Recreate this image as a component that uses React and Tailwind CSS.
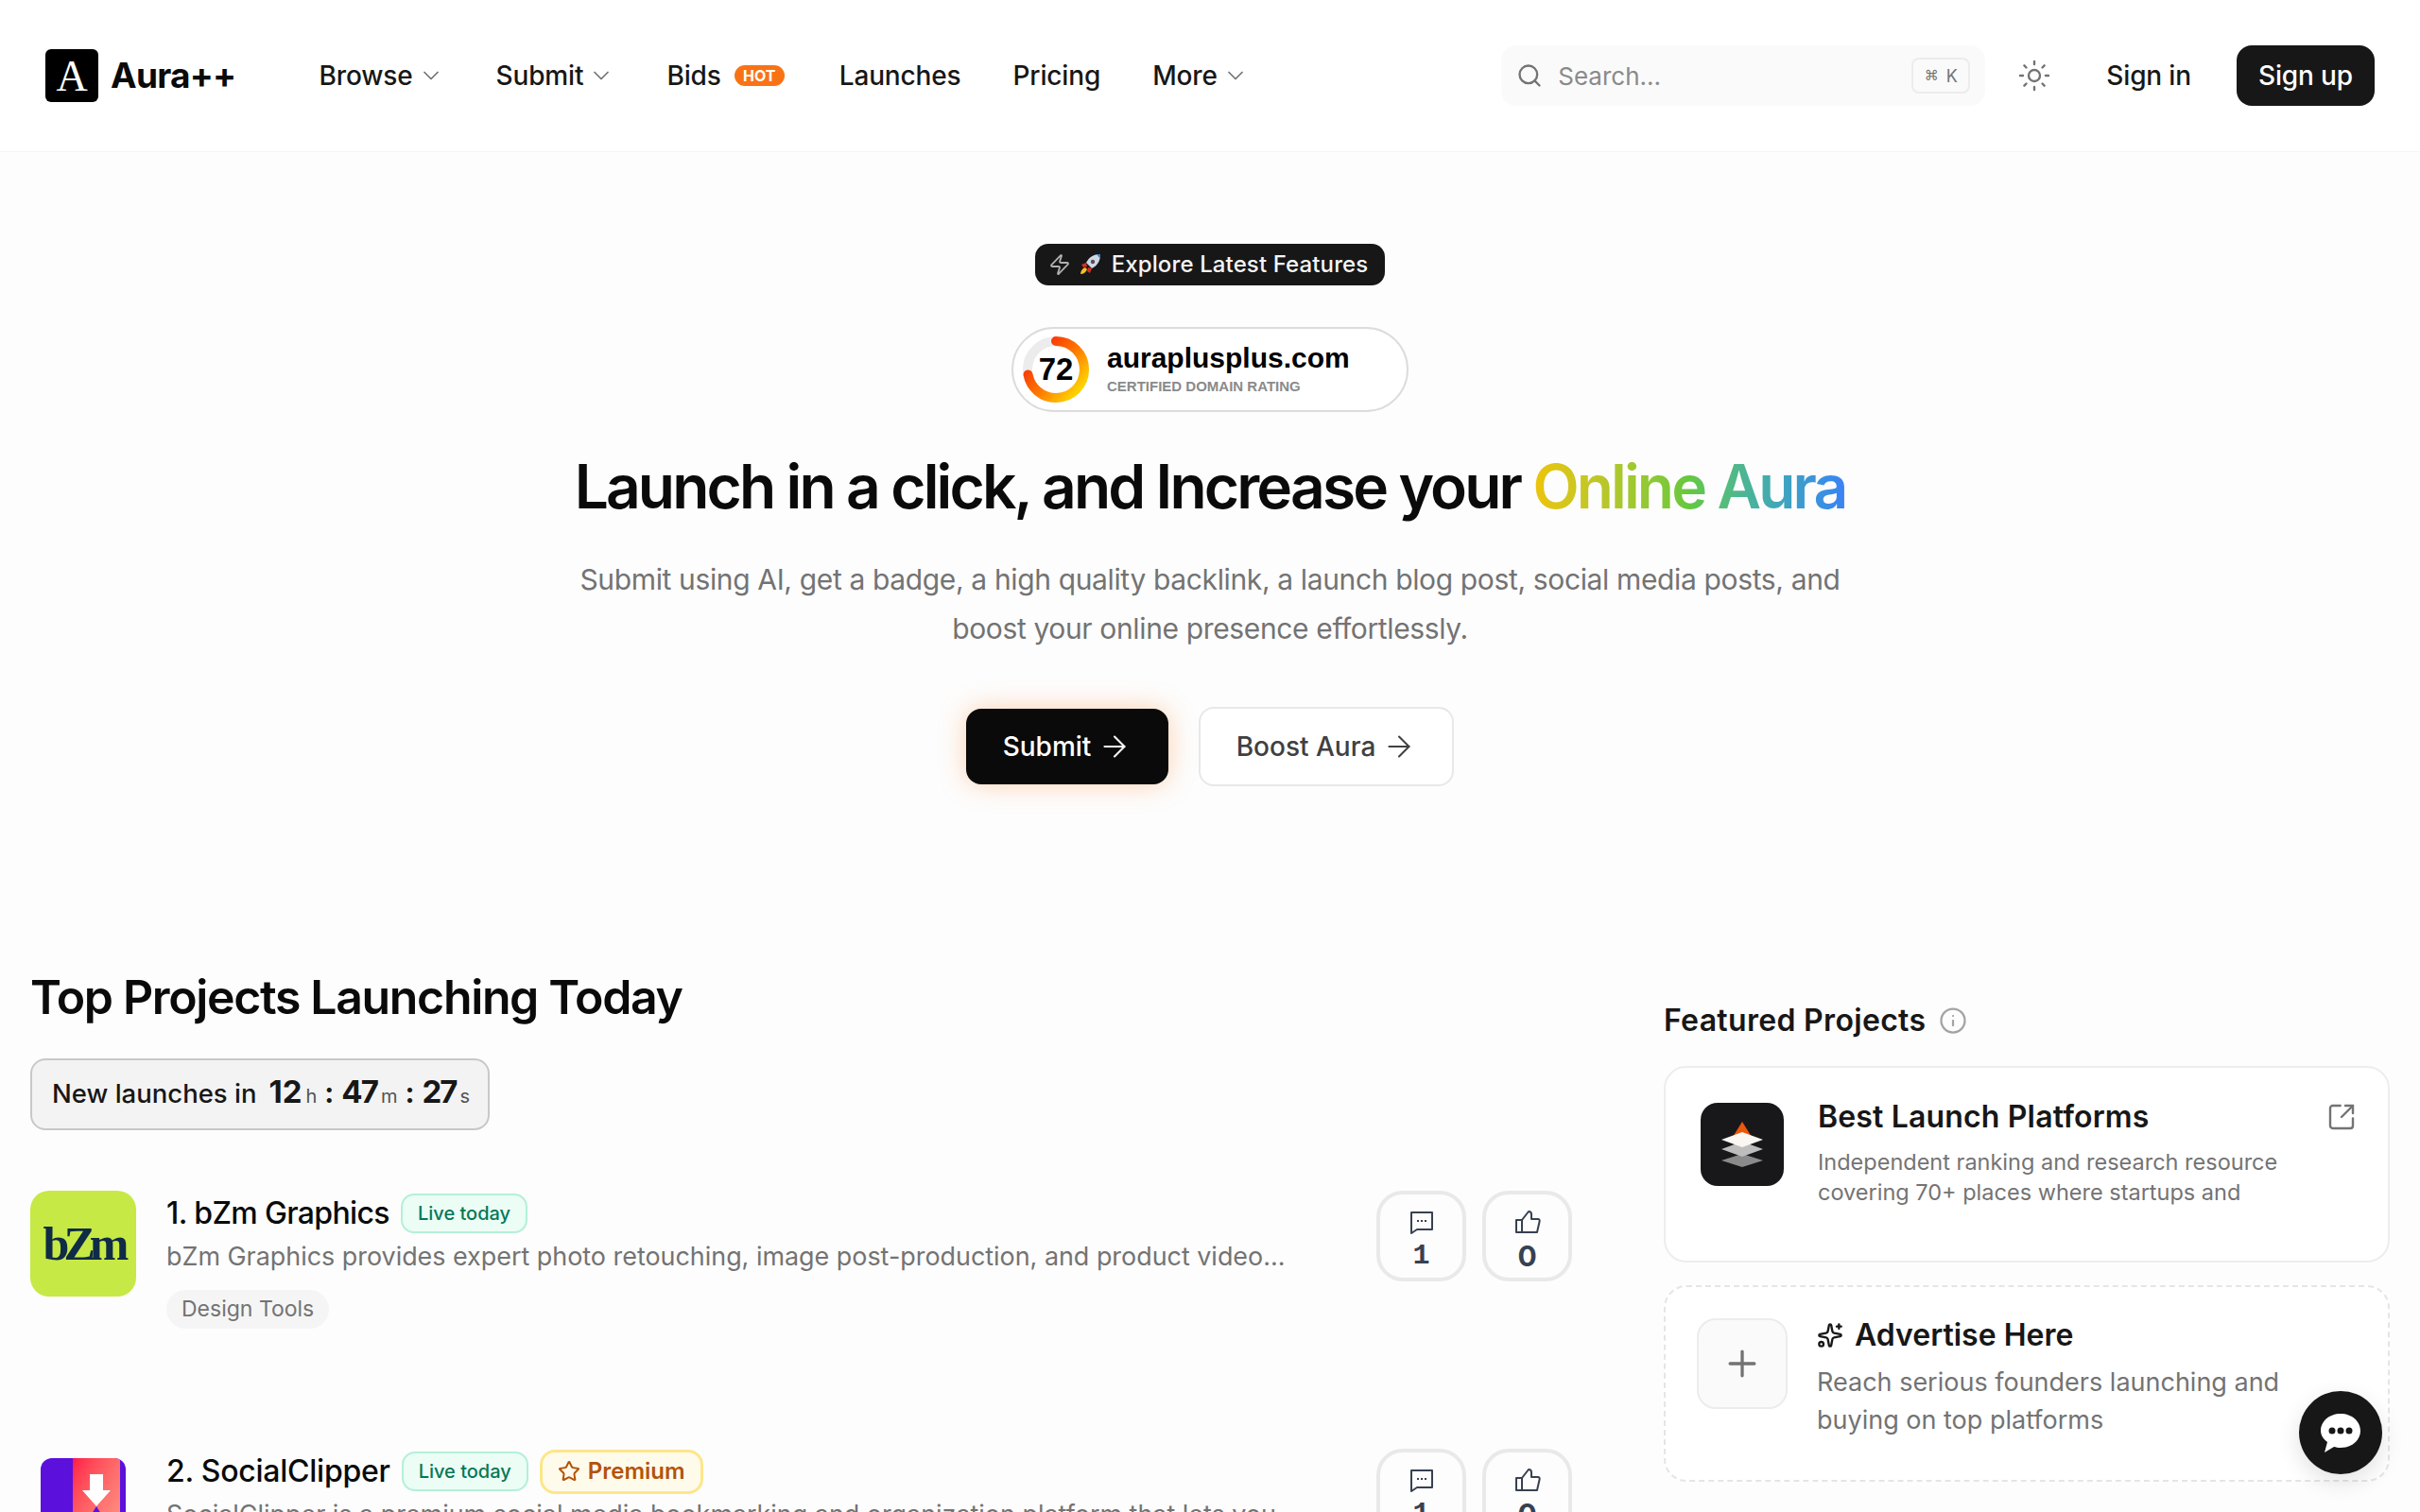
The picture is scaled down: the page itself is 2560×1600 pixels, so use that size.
import React from 'react'
import { ChevronDown, Search, Sun, Zap, ArrowRight, Info, SquareArrowOutUpRight, Plus, Sparkles, Star } from 'lucide-react'

const CommentIcon = () => (
  <svg width="26" height="26" viewBox="0 0 26 26" fill="none" stroke="#374151" strokeWidth="2">
    <path d="M2 3h22v18H8l-6 4z" strokeLinejoin="round" />
    <path d="M8 12h2M12 12h2M16 12h2" />
  </svg>
)

const ThumbIcon = () => (
  <svg width="28" height="26" viewBox="0 0 28 26" fill="none" stroke="#374151" strokeWidth="2" strokeLinejoin="round">
    <path d="M2 11h6v13H2z" />
    <path d="M8 11l7-9c2 0 3 1 3 3v5h7c1 0 2 1 1.600 2.500L24 24H8" />
  </svg>
)

const Rocket = () => (
  <svg width="24" height="24" viewBox="0 0 24 24">
    <path d="M8 10C11 4 16 1 23 1c0 7-3 12-9 15z" fill="#cfd8e3" />
    <path d="M19 1h4c0 2 0 3-.5 4.500z" fill="#3b82c4" />
    <circle cx="15" cy="9" r="2.200" fill="#5b4a5f" />
    <path d="M8 10l-5 2 2 3 4-1zM14 16l-2 5-3-2 1-4z" fill="#d92d20" />
    <path d="M7 15c-3 1-5 4-5 7 3 0 6-2 7-5z" fill="#fbbf24" />
  </svg>
)

const ScoreRing = () => (
  <svg width="72" height="72" viewBox="0 0 72 72">
    <defs>
      <linearGradient id="ring" x1="0.85" y1="0.1" x2="0.15" y2="0.9">
        <stop offset="0" stopColor="#f52a0a" />
        <stop offset="0.55" stopColor="#ff7a00" />
        <stop offset="1" stopColor="#fdd000" />
      </linearGradient>
    </defs>
    <circle cx="36" cy="36" r="30" fill="none" stroke="#ececec" strokeWidth="10" />
    <circle
      cx="36"
      cy="36"
      r="30"
      fill="none"
      stroke="url(#ring)"
      strokeWidth="10"
      strokeLinecap="round"
      strokeDasharray="135.700 188.500"
      transform="rotate(-90 36 36)"
    />
  </svg>
)

const LayersLogo = () => (
  <svg width="44" height="48" viewBox="0 0 44 48">
    <path d="M22 0l10 16H12z" fill="#ea580c" />
    <path d="M22 34l22 7-22 7L0 41z" fill="#8a8a8a" />
    <path d="M22 21l22 8-22 8L0 29z" fill="#bdbdbd" />
    <path d="M22 11l22 8-22 8L0 19z" fill="#faf7f2" />
  </svg>
)

const SocialClipperLogo = () => (
  <div className="relative w-[90px] h-[90px] mt-[10px] ml-[11px] rounded-[12px] overflow-hidden bg-[#5b10dc]">
    <div className="absolute left-[34px] top-0 w-[50px] h-full bg-gradient-to-br from-[#ff1248] to-[#ff9c8c]" />
    <svg className="absolute left-[44px] top-[17px]" width="30" height="50" viewBox="0 0 30 50">
      <path d="M8 0h14v17h8L15 34 0 17h8z" fill="#fff" />
      <path d="M15 34l10 16H5z" fill="#5b10dc" />
    </svg>
  </div>
)

const NavItem = ({ label, chevron }) => (
  <a className="flex items-center gap-[5px] text-[28px] font-medium tracking-[-0.005em] text-[#171717] leading-[40px]">
    {label}
    {chevron && <ChevronDown className="w-[28px] h-[28px] text-[#737373]" strokeWidth={1.5} />}
  </a>
)

const LiveBadge = () => (
  <span className="flex items-center h-[42px] px-[16px] rounded-[14px] border-2 border-[#b3f0d8] bg-[#ecfdf5] text-[#047857] text-[20px] font-medium">
    Live today
  </span>
)

const VoteBox = ({ icon, count, numClass }) => (
  <div className="flex flex-col items-center w-[95px] h-[96px] pt-[16px] rounded-[28px] border-4 border-[#e9e9e9] bg-[#fdfdfd]">
    {icon}
    <span className={`mt-[5px] text-[30px] leading-[36px] font-bold text-[#374151] ${numClass}`}>{count}</span>
  </div>
)

const ProjectRow = ({ logo, title, titleClass, desc, badges, tags }) => (
  <div className="flex items-start h-[273px]">
    <div className="w-[112px] h-[112px] shrink-0">{logo}</div>
    <div className="ml-[32px] w-[1240px]">
      <div className="flex items-center gap-[12px] h-[44px] mt-[2px]">
        <h3 className={`text-[32px] font-medium text-[#0a0a0a] ${titleClass}`}>{title}</h3>
        {badges}
      </div>
      <p className="mt-[3px] text-[26.900px] leading-[40px] text-[#737373] whitespace-nowrap">{desc}</p>
      {tags && (
        <span className="inline-block mt-[16px] h-[41px] px-[16px] rounded-full bg-[#f5f5f5] text-[23px] leading-[41px] text-[#737373]">
          {tags}
        </span>
      )}
    </div>
    <div className="ml-auto flex gap-[17px]">
      <VoteBox icon={<CommentIcon />} count="1" numClass="font-['Liberation_Mono',monospace]" />
      <VoteBox icon={<ThumbIcon />} count="0" numClass="font-['Inter',sans-serif]" />
    </div>
  </div>
)

export default function App() {
  return (
    <div className="relative h-[1600px] overflow-hidden bg-[#fdfdfd] font-['Inter',sans-serif] text-[#0a0a0a]">
      {/* Header */}
      <header className="flex items-center h-[161px] px-[48px] bg-white border-b border-[#f5f5f5]">
        <div className="flex items-center gap-[13px]">
          <div className="flex items-center justify-center w-[56px] h-[56px] rounded-[6px] bg-black text-white text-[46px] font-['Liberation_Serif',serif]">
            A
          </div>
          <span className="text-[37px] font-bold tracking-[-0.02em] text-[#0a0a0a]">Aura++</span>
        </div>
        <nav className="flex items-center gap-[55px] ml-[88px]">
          <NavItem label="Browse" chevron />
          <NavItem label="Submit" chevron />
          <div className="flex items-center gap-[14px] mr-[3px]">
            <NavItem label="Bids" />
            <span className="flex items-center justify-center w-[53px] h-[22px] rounded-full bg-[#f97316] text-white text-[16px] font-bold">
              HOT
            </span>
          </div>
          <NavItem label="Launches" />
          <NavItem label="Pricing" />
          <NavItem label="More" chevron />
        </nav>
        <div className="flex items-center ml-auto">
          <div className="flex items-center w-[512px] h-[64px] pl-[16px] pr-[16px] rounded-[16px] bg-[#fafafa]">
            <Search className="w-[28px] h-[28px] text-[#737373]" strokeWidth={2} />
            <span className="ml-[16px] text-[26px] text-[#8a8a8a]">Search...</span>
            <span className="ml-auto flex items-center justify-center gap-[8px] w-[62px] h-[38px] rounded-[8px] border-2 border-[#ececec] text-[18px] text-[#737373]">
              <span className="text-[15px] font-['DejaVu_Sans',sans-serif]">⌘</span>K
            </span>
          </div>
          <Sun className="ml-[34px] w-[36px] h-[36px] text-[#737373]" strokeWidth={1.6} />
          <span className="ml-[58px] text-[28px] font-medium tracking-[-0.005em] text-[#171717]">Sign in</span>
          <button className="ml-[48px] w-[146px] h-[64px] rounded-[16px] bg-[#171717] text-white text-[28px] font-medium tracking-[-0.005em]">
            Sign up
          </button>
        </div>
      </header>

      {/* Hero */}
      <section className="flex flex-col items-center pt-[97px]">
        <div className="flex items-center h-[44px] pl-[14px] pr-[18px] rounded-[14px] bg-[#171717] text-white text-[24px] font-medium">
          <Zap className="w-[24px] h-[24px] text-[#b0b0b0]" strokeWidth={1.8} />
          <span className="ml-[8px]"><Rocket /></span>
          <span className="ml-[11px] tracking-[0.005em] text-[#f5f5f5]">Explore Latest Features</span>
        </div>
        <div className="flex items-center w-[420px] h-[90px] mt-[44px] pl-[9px] rounded-full border-2 border-[#dcdcdc] bg-white font-['Liberation_Sans',sans-serif]">
          <div className="relative w-[72px] h-[72px]">
            <ScoreRing />
            <span className="absolute inset-0 flex items-center justify-center text-[33px] font-bold text-black">72</span>
          </div>
          <div className="ml-[18px]">
            <div className="text-[30px] leading-[34px] font-bold text-black mt-[-2px]">auraplusplus.com</div>
            <div className="mt-[4px] text-[15px] leading-[18px] font-bold text-[#8a8a8a]">CERTIFIED DOMAIN RATING</div>
          </div>
        </div>
        <h1 className="mt-[43px] text-[64px] leading-[72px] font-semibold tracking-[-0.0445em] text-[#0a0a0a]">
          Launch in a click, and Increase your{' '}
          <span className="bg-gradient-to-r from-[#eec404] via-[#65c83c] to-[#3b82f6] bg-clip-text text-transparent">Online Aura</span>
        </h1>
        <p className="mt-[36px] text-center text-[30px] leading-[52px] text-[#737373] tracking-[-0.012em] whitespace-nowrap">
          Submit using AI, get a badge, a high quality backlink, a launch blog post, social media posts, and
          <br />
          boost your online presence effortlessly.
        </p>
        <div className="flex items-center gap-[32px] mt-[57px]">
          <button className="flex items-center justify-center gap-[7px] w-[214px] h-[80px] rounded-[16px] bg-[#0a0a0a] text-white text-[28px] font-medium shadow-[0_0_28px_rgba(251,146,60,0.4)]">
            Submit <ArrowRight className="w-[36px] h-[36px]" strokeWidth={1.4} />
          </button>
          <button className="flex items-center justify-center gap-[7px] w-[270px] h-[84px] rounded-[16px] border-2 border-[#e8e8e8] bg-white text-[#404040] text-[28px] font-medium">
            Boost Aura <ArrowRight className="w-[36px] h-[36px]" strokeWidth={1.4} />
          </button>
        </div>
      </section>

      {/* Lists */}
      <main className="flex gap-[97px] px-[32px] pt-[195px]">
        <div className="w-[1631px] shrink-0">
          <h2 className="text-[50px] leading-[56px] font-semibold tracking-[-0.027em] text-[#0a0a0a]">Top Projects Launching Today</h2>
          <div className="flex items-baseline w-[486px] h-[76px] mt-[37px] pl-[21px] pt-[9px] rounded-[16px] border-2 border-[#c8c8c8] bg-[#f3f3f3] text-[#171717]">
            <span className="text-[27.500px] font-medium">New launches in</span>
            <span className="ml-[13px] text-[33px] font-bold">12</span>
            <span className="ml-[4px] text-[20px] text-[#525252]">h</span>
            <span className="ml-[8px] text-[30px] font-bold">:</span>
            <span className="ml-[8px] text-[33px] font-bold tracking-[-0.06em]">47</span>
            <span className="ml-[4px] text-[20px] text-[#525252]">m</span>
            <span className="ml-[8px] text-[30px] font-bold">:</span>
            <span className="ml-[8px] text-[33px] font-bold tracking-[-0.06em]">27</span>
            <span className="ml-[4px] text-[20px] text-[#525252]">s</span>
          </div>
          <div className="mt-[64px]">
            <ProjectRow
              logo={
                <div className="flex items-center justify-center w-[112px] h-[112px] rounded-[20px] bg-[#c6e945] text-[#0f2b46] text-[50px] font-bold tracking-[-0.12em] font-['Liberation_Serif',serif]">
                  bZm
                </div>
              }
              title="1. bZm Graphics"
              titleClass="tracking-[-0.02em]"
              desc="bZm Graphics provides expert photo retouching, image post-production, and product video..."
              badges={<LiveBadge />}
              tags="Design Tools"
            />
            <ProjectRow
              logo={<SocialClipperLogo />}
              title="2. SocialClipper"
              titleClass="tracking-[-0.008em]"
              desc="SocialClipper is a premium social media bookmarking and organization platform that lets you"
              badges={
                <>
                  <LiveBadge />
                  <span className="flex items-center gap-[8px] h-[47px] px-[16px] rounded-[16px] border-[3px] border-[#fde68a] bg-[#fffbeb] text-[#b45309] text-[24px] font-semibold">
                    <Star className="w-[24px] h-[24px]" strokeWidth={2} /> Premium
                  </span>
                </>
              }
            />
          </div>
        </div>

        <aside className="w-[768px] shrink-0 pt-[33px]">
          <div className="flex items-center gap-[14px] h-[40px]">
            <h2 className="text-[32px] font-semibold tracking-[0.01em] text-[#171717]">Featured Projects</h2>
            <Info className="w-[30px] h-[30px] text-[#a3a3a3]" strokeWidth={1.8} />
          </div>
          <div className="relative flex w-[768px] h-[208px] mt-[28px] pl-[37px] pt-[37px] rounded-[24px] border-2 border-[#ededed] bg-white">
            <div className="flex items-center justify-center w-[88px] h-[88px] shrink-0 rounded-[18px] bg-[#18181b]">
              <LayersLogo />
            </div>
            <div className="ml-[36px]">
              <h3 className="text-[32px] leading-[40px] font-semibold tracking-[0.005em] text-[#171717] mt-[-5px]">Best Launch Platforms</h3>
              <p className="mt-[12px] text-[23.500px] leading-[32px] text-[#737373] w-[510px]">
                Independent ranking and research resource covering 70+ places where startups and
              </p>
            </div>
            <SquareArrowOutUpRight className="absolute right-[33px] top-[36px] w-[32px] h-[32px] text-[#737373]" strokeWidth={1.8} />
          </div>
          <div className="flex w-[768px] h-[208px] mt-[24px] pl-[33px] pt-[33px] rounded-[24px] border-2 border-dashed border-[#e5e5e5] bg-white">
            <div className="flex items-center justify-center w-[96px] h-[96px] shrink-0 rounded-[20px] border-2 border-[#ececec] bg-[#fafafa]">
              <Plus className="w-[44px] h-[44px] text-[#737373]" strokeWidth={1.8} />
            </div>
            <div className="ml-[31px]">
              <div className="flex items-center gap-[12px] mt-[-2px]">
                <Sparkles className="w-[28px] h-[28px] text-[#171717]" strokeWidth={2} />
                <h3 className="text-[32px] leading-[40px] font-semibold text-[#171717]">Advertise Here</h3>
              </div>
              <p className="mt-[10px] text-[27px] leading-[40px] text-[#737373] w-[540px]">
                Reach serious founders launching and buying on top platforms
              </p>
            </div>
          </div>
        </aside>
      </main>

      {/* Chat launcher */}
      <button className="absolute left-[2432px] top-[1472px] flex items-center justify-center w-[88px] h-[88px] rounded-full bg-[#171717] shadow-[0_8px_24px_rgba(0,0,0,0.12)]">
        <svg width="46" height="46" viewBox="0 0 46 46">
          <path d="M23 3c12 0 21 8 21 18s-9 18-21 18c-3 0-5-.5-7-1l-10 6 3-11C5 30 2 26 2 21 2 11 11 3 23 3z" fill="#fff" />
          <circle cx="14" cy="21" r="3.500" fill="#171717" />
          <circle cx="23" cy="21" r="3.500" fill="#171717" />
          <circle cx="32" cy="21" r="3.500" fill="#171717" />
        </svg>
      </button>
    </div>
  )
}
